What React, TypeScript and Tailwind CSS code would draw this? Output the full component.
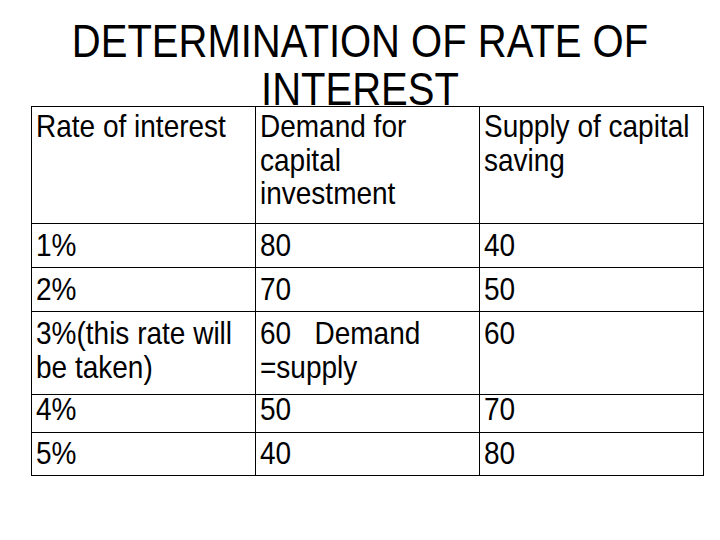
import { cva } from "class-variance-authority";
import { clsx } from "clsx";

const rows = [
  { rate: "1%", demand: "80", supply: "40", height: "h-[44px]", pad: "mt-[4px]" },
  { rate: "2%", demand: "70", supply: "50", height: "h-[44px]", pad: "mt-[4px]" },
  {
    rate: "3%(this rate will be taken)",
    demand: "60\u00a0\u00a0 Demand =supply",
    supply: "60",
    height: "h-[83px]",
    pad: "mt-[4px]",
  },
  { rate: "4%", demand: "50", supply: "70", height: "h-[38px]", pad: "-mt-[3px]" },
  { rate: "5%", demand: "40", supply: "80", height: "h-[43px]", pad: "mt-[3px]" },
];

const CELL_STYLE = cva("border-r border-b border-black px-[4px] text-[28px] text-black", {
  variants: {
    variant: {
      header: "h-[117px]",
      body: "",
    },
  },
});

// the slide text is drawn a bit taller than plain Arial
const Stretched = ({
  children,
  className,
}: {
  children: React.ReactNode;
  className?: string;
}) => (
  <span className={clsx("block origin-top scale-y-[1.15] leading-[29.6px]", className)}>
    {children}
  </span>
);

const InterestTable = () => {
  return (
    <div className="ml-[31px] grid w-[673px] grid-cols-3 border-l border-t border-black">
      {/* Header */}
      <div className={CELL_STYLE({ variant: "header" })}>
        <Stretched className="mt-[2px]">Rate of interest</Stretched>
      </div>
      <div className={CELL_STYLE({ variant: "header" })}>
        <Stretched className="mt-[2px]">Demand for capital investment</Stretched>
      </div>
      <div className={CELL_STYLE({ variant: "header" })}>
        <Stretched className="mt-[2px]">Supply of capital saving</Stretched>
      </div>

      {/* Rows */}
      {rows.map((row, index) =>
        [row.rate, row.demand, row.supply].map((value, col) => (
          <div
            key={`${index}-${col}`}
            className={clsx(CELL_STYLE({ variant: "body" }), row.height)}
          >
            <Stretched className={row.pad}>{value}</Stretched>
          </div>
        )),
      )}
    </div>
  );
};

const App = () => {
  return (
    <div
      className="h-[540px] w-[720px] overflow-hidden bg-white"
      style={{ fontFamily: '"Liberation Sans", Arial, sans-serif' }}
    >
      <div className="h-[106px] pt-[18px]">
        <h1 className="origin-top scale-y-[1.15] text-center text-[40px] leading-[41.7px] text-black">
          DETERMINATION OF RATE OF
          <br />
          INTEREST
        </h1>
      </div>
      <InterestTable />
    </div>
  );
};

export default App;
